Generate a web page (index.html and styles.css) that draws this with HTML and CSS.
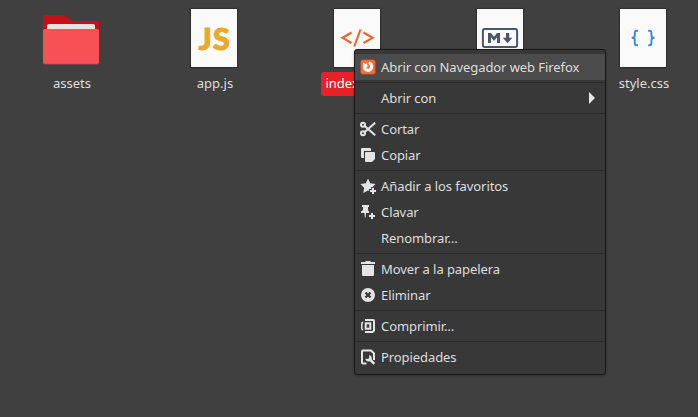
FILE: index.html
```html
<!DOCTYPE html>
<html lang="es">
<head>
<meta charset="utf-8">
<title>Archivos</title>
<link rel="stylesheet" href="styles.css">
</head>
<body>
<main class="files">
  <div class="file">
    <svg class="folder" width="58" height="58" viewBox="0 0 58 58">
      <path d="M1 25V8a2 2 0 0 1 2-2h17c3 0 4 1 6 3s3 3 6 3h23a2 2 0 0 1 2 2v11z" fill="#c90f16"/>
      <path d="M5 30V17a2 2 0 0 1 2-2h44a2 2 0 0 1 2 2v13z" fill="#e9e3e1"/>
      <rect x="1" y="20" width="56" height="35.5" rx="2" fill="#b73f43"/>
      <rect x="1" y="20" width="56" height="34.7" rx="2" fill="#f75055"/>
    </svg>
    <span class="name">assets</span>
  </div>
  <div class="file">
    <div class="page js">JS</div>
    <span class="name">app.js</span>
  </div>
  <div class="file">
    <div class="page">
      <svg width="46" height="58" viewBox="0 0 46 58" fill="none" stroke="#ef622a" stroke-width="2.1">
        <path d="M17.5 23.5 8.5 28.8l9 5.2M29.5 23.5l9 5.3-9 5.2M26.5 20.5l-6.3 17"/>
      </svg>
    </div>
    <span class="name selected">index.html</span>
  </div>
  <div class="file">
    <div class="page">
      <svg width="46" height="58" viewBox="0 0 46 58">
        <rect x="5.9" y="20" width="34.2" height="18" rx="2" fill="none" stroke="#4b5765" stroke-width="2"/>
        <path d="M11 34V24h3l3 3.8 3-3.8h3v10h-3v-5.7l-3 3.7-3-3.7V34zM29 24h3.2v4.7h3.2l-4.8 5.5-4.8-5.5H29z" fill="#4b5765"/>
      </svg>
    </div>
  </div>
  <div class="file">
    <div class="page">
      <svg width="46" height="58" viewBox="0 0 46 58" fill="none" stroke="#3b87df" stroke-width="1.9">
        <path d="M18 21.8h-1.2q-2 0-2 2v2.7q0 2.3-3.1 2.3 3.1 0 3.1 2.3v3.1q0 2 2 2H18M28.2 21.8h1.2q2 0 2 2v2.7q0 2.3 3.1 2.3-3.1 0-3.1 2.3v3.1q0 2-2 2h-1.2"/>
      </svg>
    </div>
    <span class="name">style.css</span>
  </div>
</main>

<nav class="menu">
  <div class="item active">
    <svg class="icon" viewBox="0 0 16 16">
      <rect x=".7" y=".7" width="14.6" height="14.6" rx="2" fill="#f5703d" stroke="#a84927" stroke-width=".6"/>
      <path d="M3.2 3.5 5.3 5l2-.8-.4 2.1 1.4.7-2 1.2c.2 1.3 1.3 1.9 2.4 1.6 2.1-.7 1.9-3.3-.2-4.7L9 2.5c2.7.7 4.4 2.8 4.1 5.6-.3 2.9-2.3 4.8-5 4.8-3.2 0-5.3-2.5-5.2-5.3z" fill="#fff"/>
    </svg>
    <span class="label">Abrir con Navegador web Firefox</span>
  </div>
  <hr>
  <div class="item">
    <span class="icon"></span><span class="label">Abrir con</span>
    <svg class="arrow" width="6" height="12" viewBox="0 0 6 12"><path d="M0 0v12l6-6z" fill="#e6e6e6"/></svg>
  </div>
  <hr>
  <div class="item">
    <svg class="icon" viewBox="0 0 16 16" fill="none" stroke="#e4e4e4" stroke-width="2">
      <circle cx="3" cy="3.7" r="2"/><circle cx="3" cy="12.3" r="2"/>
      <path d="M4.7 5.1 15.2 14.3M4.7 10.9 15.2 1.7"/>
    </svg>
    <span class="label">Cortar</span>
  </div>
  <div class="item">
    <svg class="icon" viewBox="0 0 16 16" fill="#e4e4e4">
      <path d="M1 2a1 1 0 0 1 1-1h8a1 1 0 0 1 1 1v2H4v7H2a1 1 0 0 1-1-1z"/>
      <path d="M5 6a1 1 0 0 1 1-1h8a1 1 0 0 1 1 1v6l-3 3H6a1 1 0 0 1-1-1z"/>
    </svg>
    <span class="label">Copiar</span>
  </div>
  <hr>
  <div class="item">
    <svg class="icon" viewBox="0 0 16 16" fill="#e4e4e4">
      <path d="M8 .5l2.2 4.7 5.3.7-2.3 2.4V9h-2v2H9v2L8 12.6l-4.8 2.5 1-5.2L.5 5.9l5.3-.7z"/>
      <path d="M12 10h2v2h2v2h-2v2h-2v-2h-2v-2h2z"/>
    </svg>
    <span class="label">Añadir a los favoritos</span>
  </div>
  <div class="item">
    <svg class="icon" viewBox="0 0 16 16" fill="#e4e4e4">
      <path d="M2 1h7v2H8v3l1 1.5V9H6l-.4 4.5h-.8L4.5 9H1V7.5L3 6V3H2z"/>
      <path d="M11 9h2v2h2v2h-2v2h-2v-2H9v-2h2z"/>
    </svg>
    <span class="label">Clavar</span>
  </div>
  <div class="item"><span class="icon"></span><span class="label">Renombrar…</span></div>
  <hr>
  <div class="item">
    <svg class="icon" viewBox="0 0 16 16" fill="#e4e4e4"><path d="M1 1h4l1-1h4l1 1h4v2H1zM2 4h12v10q0 1-1 1H3q-1 0-1-1z"/></svg>
    <span class="label">Mover a la papelera</span>
  </div>
  <div class="item">
    <svg class="icon" viewBox="0 0 16 16"><circle cx="8" cy="8" r="7" fill="#e4e4e4"/><path d="m5.5 5.5 5 5m0-5-5 5" stroke="#383838" stroke-width="2.2"/></svg>
    <span class="label">Eliminar</span>
  </div>
  <hr>
  <div class="item">
    <svg class="icon" viewBox="0 0 16 16" fill="none" stroke="#e4e4e4" stroke-width="2">
      <path d="M5 2h8q1 0 1 1v9.5L12.5 14H5"/>
      <path d="M3.2 4.2Q1.8 4.2 1.8 5.5v5q0 1.3 1.4 1.3" stroke-width="1.5"/>
      <rect x="5.7" y="5.3" width="4.6" height="5.4"/>
    </svg>
    <span class="label">Comprimir…</span>
  </div>
  <hr>
  <div class="item">
    <svg class="icon" viewBox="0 0 16 16" fill="none" stroke="#e4e4e4" stroke-width="2">
      <path d="M6.5 14.5H3q-1 0-1-1V2.5q0-1 1-1h8l3 3V11"/>
      <path d="m9.5 10 4.8 4.8" stroke-width="2.6"/>
      <path d="M9 6.2a3.2 3.2 0 1 1-3.6 3.6l2.7.2 1.2-1.2z" fill="#e4e4e4" stroke="none"/>
    </svg>
    <span class="label">Propiedades</span>
  </div>
</nav>
</body>
</html>
```
FILE: styles.css
```css
* { box-sizing: border-box; }

body {
  margin: 0;
  width: 698px;
  height: 417px;
  overflow: hidden;
  background: #404040;
  color: #dedede;
  font: 13px/16px "Noto Sans", "Open Sans", sans-serif;
}

svg { display: block; }

.files {
  display: grid;
  grid-template-columns: repeat(5, 143px);
  margin-left: -0.5px;
  padding-top: 9px;
}

.file {
  display: flex;
  flex-direction: column;
  align-items: center;
}

.page {
  width: 46px;
  height: 58px;
  background: #fafafa;
  box-shadow: 0 0 1px 1px #303030;
}

.js {
  padding-left: 1px;
  font: 900 31px/59px Lato, sans-serif;
  letter-spacing: 0.8px;
  color: #e9a92a;
  -webkit-text-stroke: 0.9px #e9a92a;
  text-align: center;
}

.name {
  margin: 5px 0 0 2px;
  height: 24px;
  padding: 0 4px;
  line-height: 23px;
  border-radius: 3px;
}

.selected {
  background: #e92028;
  color: #fff;
}

.menu {
  position: absolute;
  left: 354px;
  top: 49px;
  width: 252px;
  padding: 4px 0;
  background: #383838;
  border: 1px solid #191919;
  border-radius: 3px;
  box-shadow: 0 1px 3px #0004;
}

.item {
  display: flex;
  align-items: center;
  gap: 5px;
  height: 26px;
  padding: 0 10px 0 5px;
}

.active { background: #4b4b4b; }

.icon {
  flex: none;
  width: 16px;
  height: 16px;
}

.label {
  white-space: nowrap;
  letter-spacing: -0.08px;
}

.arrow { margin-left: auto; }

hr {
  height: 1px;
  margin: 2px 0;
  border: 0;
  background: #2a2a2a;
}
```
